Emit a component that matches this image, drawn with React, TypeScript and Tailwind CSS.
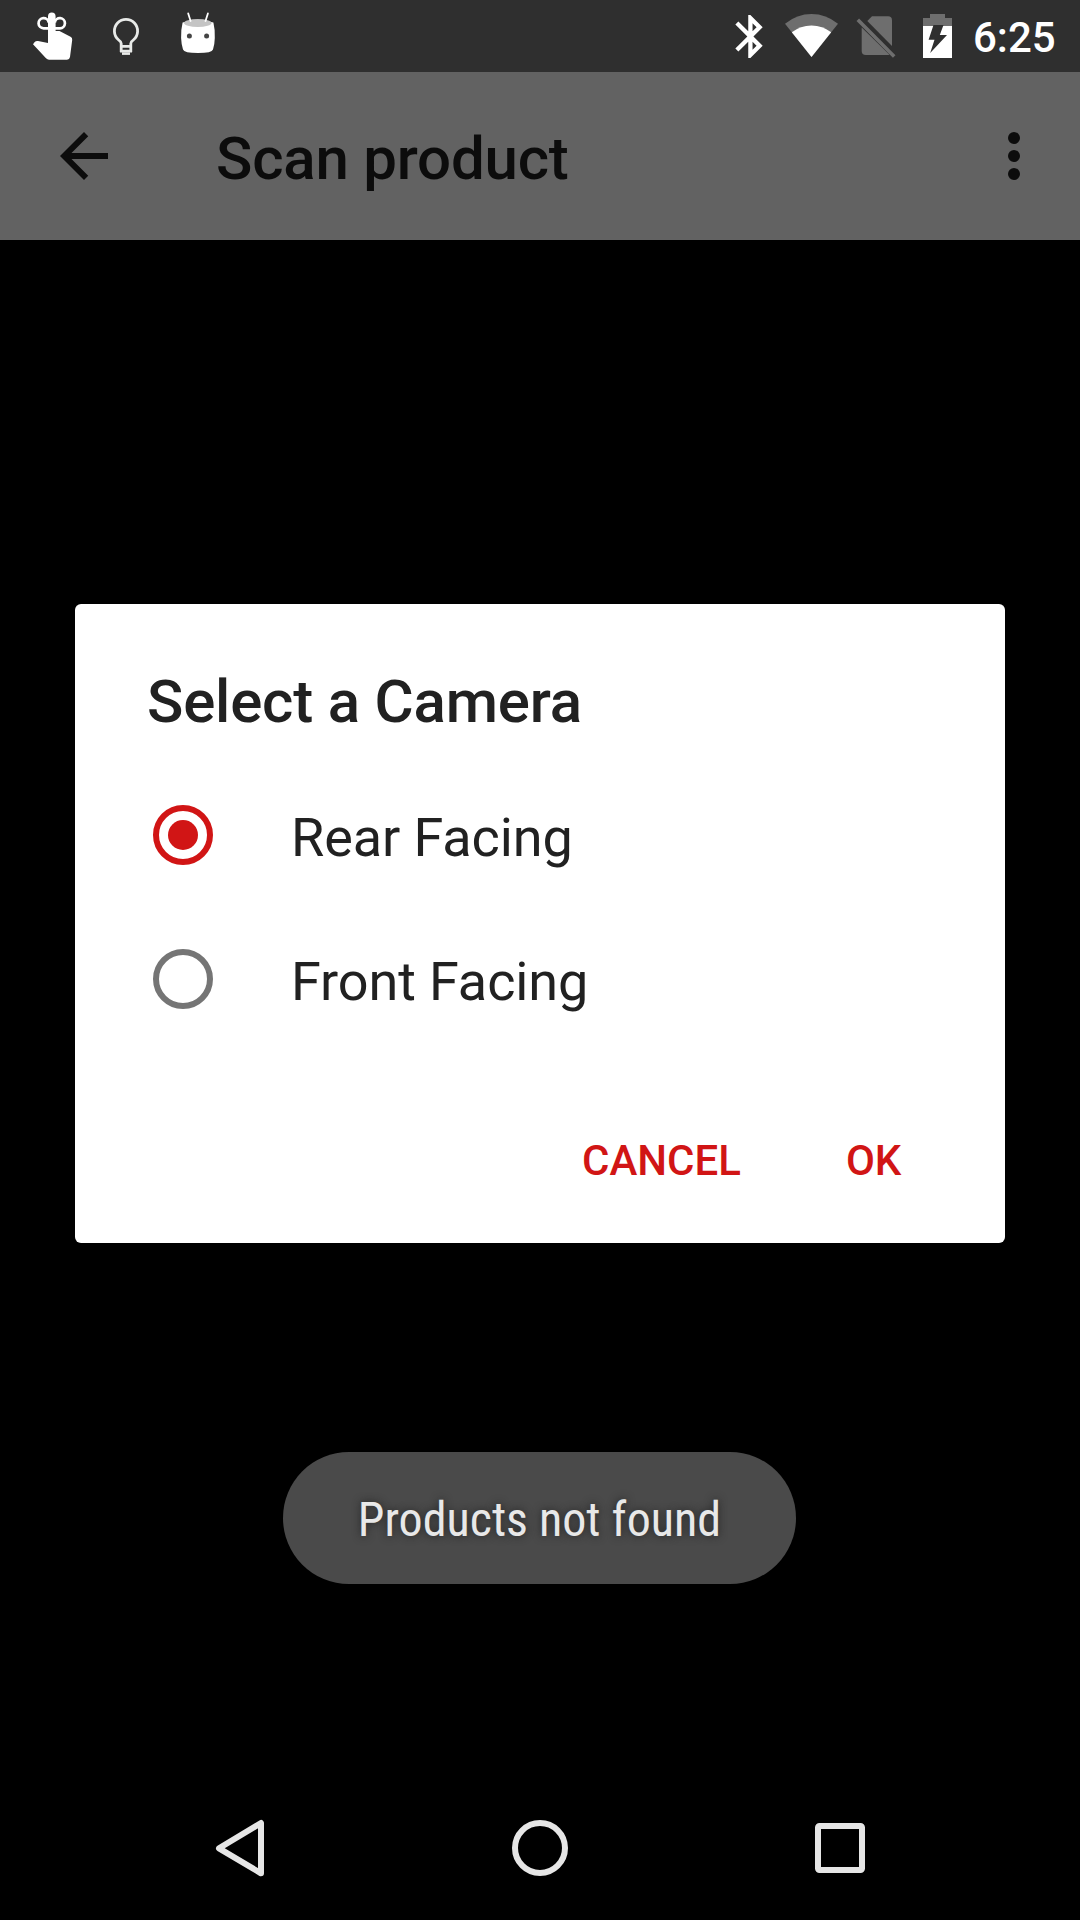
import React from "react";

function StatusBar() {
  return (
    <div className="flex h-[72px] items-start bg-[#2f2f2f] text-white">
      <svg className="ml-[30px] h-[72px] w-[45px]" viewBox="30 0 45 72" fill="#fff">
        <path d="M48 43V16.4a3.8 3.8 0 0 1 7.6 0V31H59.5L71 37Q72.4 38 72.2 40L70 57Q69.5 59.7 67 59.7H49Q47.4 59.7 46 58.3L33 44.2L34.7 42Q36 40.8 38 41.1Z" />
        <path d="M49 28.3H43.6A5.1 5.1 0 1 1 48.7 22.5M54.8 28.3H60A5.1 5.1 0 1 0 54.8 22.5" fill="none" stroke="#fff" strokeWidth="2.7" />
      </svg>
      <svg className="ml-[35px] h-[72px] w-[32px]" viewBox="110 0 32 72" fill="none" stroke="#e8eae8">
        <path d="M121.2 52V43.5Q121.2 41.6 118.5 39.8A11.6 11.6 0 1 1 133.5 39.8Q130.8 41.6 130.8 43.5V52" strokeWidth="2.8" />
        <path d="M120 46.3H132M120 51.2H132" strokeWidth="2.8" />
        <path d="M122 53.6H130" strokeWidth="2.6" />
      </svg>
      <svg className="ml-[36px] h-[72px] w-[40px]" viewBox="178 0 40 72">
        <path d="M182.6 22.5Q198 18 213.4 22.5Q215.2 30 214.8 38Q214.6 45 213 49.5Q212 53 198 53Q184 53 183 49.5Q181.4 45 181.1 38Q180.8 30 182.6 22.5Z" fill="#fff" />
        <ellipse cx="197.8" cy="23" rx="13.8" ry="4" fill="#c4c4c4" />
        <path d="M188.2 13.4L190.6 21M207.9 13.4L205.5 21" stroke="#fff" strokeWidth="1.8" strokeLinecap="round" />
        <circle cx="189.4" cy="36" r="2.5" fill="#444" />
        <circle cx="206.6" cy="36" r="2.5" fill="#444" />
      </svg>
      <svg className="ml-[514px] h-[72px] w-[38px]" viewBox="732 0 38 72" fill="#fff">
        <path transform="translate(724.6 10.7) scale(2.15)" d="M17.71 7.71L12 2h-1v7.59L6.41 5 5 6.41 10.59 12 5 17.59 6.41 19 11 14.41V22h1l5.71-5.71-4.3-4.29 4.3-4.29zM13 5.83l1.88 1.88L13 9.59V5.83zm1.88 10.46L13 18.17v-3.76l1.88 1.88z" />
      </svg>
      <svg className="ml-[12px] h-[72px] w-[60px]" viewBox="782 0 60 72">
        <path d="M811.5 57L785 23.7Q797 14 811.5 14T838 23.7Z" fill="#6e6e6e" />
        <path d="M811.5 57L791.8 32.2Q800.5 25.4 811.5 25.4T831.2 32.2Z" fill="#fff" />
      </svg>
      <svg className="ml-[12px] h-[72px] w-[46px]" viewBox="854 0 46 72">
        <path d="M867.3 20.9L872 16.2H888Q892 16.2 892 20.2V46Z" fill="#6e6e6e" />
        <path d="M861.7 27.5L889.3 54.4Q888.6 55 887.5 55H865.7Q861.7 55 861.7 51Z" fill="#6e6e6e" />
        <path d="M857.8 19.8L894.2 56.5" stroke="#6e6e6e" strokeWidth="3.6" />
      </svg>
      <svg className="ml-[20px] h-[72px] w-[36px]" viewBox="920 0 36 72">
        <path d="M930 14H945V18H952V26H923V18H930Z" fill="#6e6e6e" />
        <path d="M923 26H952V58H923Z" fill="#fff" />
        <path d="M933.5 25H943.5L939.8 35H947L930.2 53L934.5 39.8H928.6Z" fill="#2f2f2f" />
      </svg>
      <span className="ml-[17px] pt-[2px] text-[42px] leading-[72px] font-medium">6:25</span>
    </div>
  );
}

function AppBar() {
  return (
    <header className="flex h-[168px] items-center bg-[#626262] text-[#0c0c0c]">
      <svg className="ml-[48px] h-[72px] w-[72px]" viewBox="0 0 24 24" fill="currentColor">
        <path d="M20 11H7.83l5.59-5.59L12 4l-8 8 8 8 1.41-1.41L7.83 13H20v-2z" />
      </svg>
      <h1 className="ml-[96px] flex-1 pt-[6px] text-[60px] leading-[70px] font-medium tracking-[-0.2px]">Scan product</h1>
      <svg className="mr-[30px] h-[72px] w-[72px]" viewBox="0 0 24 24" fill="currentColor">
        <circle cx="12" cy="6" r="2" />
        <circle cx="12" cy="12" r="2" />
        <circle cx="12" cy="18" r="2" />
      </svg>
    </header>
  );
}

function Option({ label, checked }: { label: string; checked: boolean }) {
  return (
    <div className="flex h-[144px] items-center">
      <span
        className={
          checked
            ? "ml-[78px] flex size-[60px] items-center justify-center rounded-full border-6 border-[#d11515]"
            : "ml-[78px] flex size-[60px] items-center justify-center rounded-full border-6 border-[#757575]"
        }
      >
        {checked && <span className="size-[30px] rounded-full bg-[#d11515]" />}
      </span>
      <span className="ml-[78px] pt-[5px] text-[54px] leading-[64px] tracking-[-0.1px]">{label}</span>
    </div>
  );
}

function CameraDialog() {
  return (
    <section className="mx-auto mt-[364px] h-[639px] w-[930px] rounded-[6px] bg-white text-[#212121]">
      <h2 className="ml-[72px] pt-[63px] text-[60px] leading-[70px] font-medium tracking-[-0.2px]">Select a Camera</h2>
      <div className="mt-[26px]">
        <Option label="Rear Facing" checked />
        <Option label="Front Facing" checked={false} />
      </div>
      <div className="mt-[85px] flex text-[42px] leading-[50px] font-medium text-[#d11515]">
        <button className="ml-[507px]">CANCEL</button>
        <button className="ml-[105px]">OK</button>
      </div>
    </section>
  );
}

function NavBar() {
  return (
    <nav className="grid h-[144px] grid-cols-3 items-center justify-items-center bg-black px-[90px]">
      <svg className="size-[60px]" viewBox="0 0 60 60" fill="none" stroke="#e6e6e6" strokeWidth="6" strokeLinejoin="round">
        <path d="M9 30.3L51 5V55.3Z" />
      </svg>
      <svg className="size-[60px]" viewBox="0 0 60 60" fill="none" stroke="#e6e6e6" strokeWidth="6">
        <circle cx="30" cy="30" r="25" />
      </svg>
      <svg className="size-[60px]" viewBox="0 0 60 60" fill="none" stroke="#e6e6e6" strokeWidth="6" strokeLinejoin="round">
        <rect x="8" y="8" width="44" height="44" rx="1.5" />
      </svg>
    </nav>
  );
}

export default function App() {
  return (
    <div className="flex h-[1920px] w-[1080px] flex-col overflow-hidden bg-black font-['Roboto',sans-serif]">
      <StatusBar />
      <AppBar />
      <main className="flex-1">
        <CameraDialog />
        <div className="ml-[283px] mt-[209px] flex h-[132px] w-[513px] items-center justify-center rounded-full bg-[#4a4a4a]">
          <span className="pt-[3px] text-[48px] leading-[56px] whitespace-nowrap text-[#e8e8e8] [font-stretch:75%] [text-shadow:0_0_8px_#222]">
            Products not found
          </span>
        </div>
      </main>
      <NavBar />
    </div>
  );
}
